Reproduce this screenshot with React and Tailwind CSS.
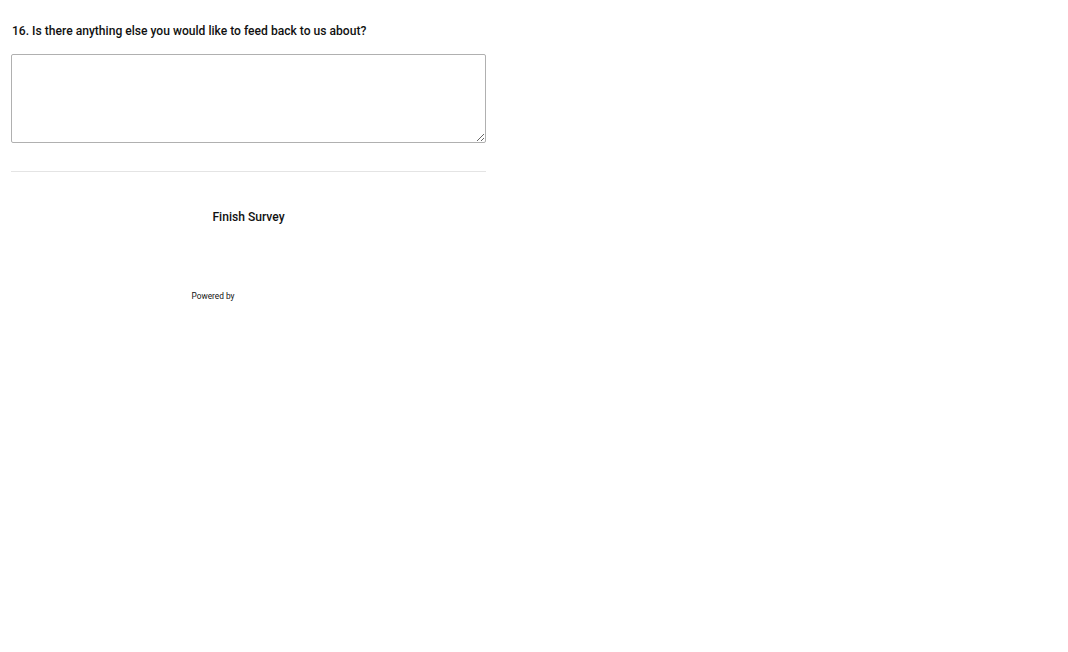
export default function App() {
  return (
    <div className="min-h-[652px] w-[1068px] bg-white" style={{ fontFamily: "Roboto, 'Liberation Sans', sans-serif" }}>
      <div className="ml-[11px] w-[475px] pt-[23px]">
        <div className="pl-px text-[12.1px] font-medium leading-[16px] text-[#111]">
          16. Is there anything else you would like to feed back to us about?
        </div>
        <textarea className="mt-[15px] block h-[89px] w-[475px] resize-y rounded-[2px] border border-[#b0b0b0] bg-white p-1 text-[13px] outline-none" />
        <div className="mt-[28px] h-px w-[475px] bg-[#e4e4e4]" />
        <div className="mt-[37px] flex justify-center">
          <button className="text-[12.1px] font-medium leading-[16px] text-[#111]">Finish Survey</button>
        </div>
        <div className="mt-[65px] flex items-center justify-center">
          <span className="text-[8.3px] leading-[12px] text-[#111]">Powered by</span>
          <span className="inline-block h-[12px] w-[71px]" />
        </div>
      </div>
    </div>
  );
}
